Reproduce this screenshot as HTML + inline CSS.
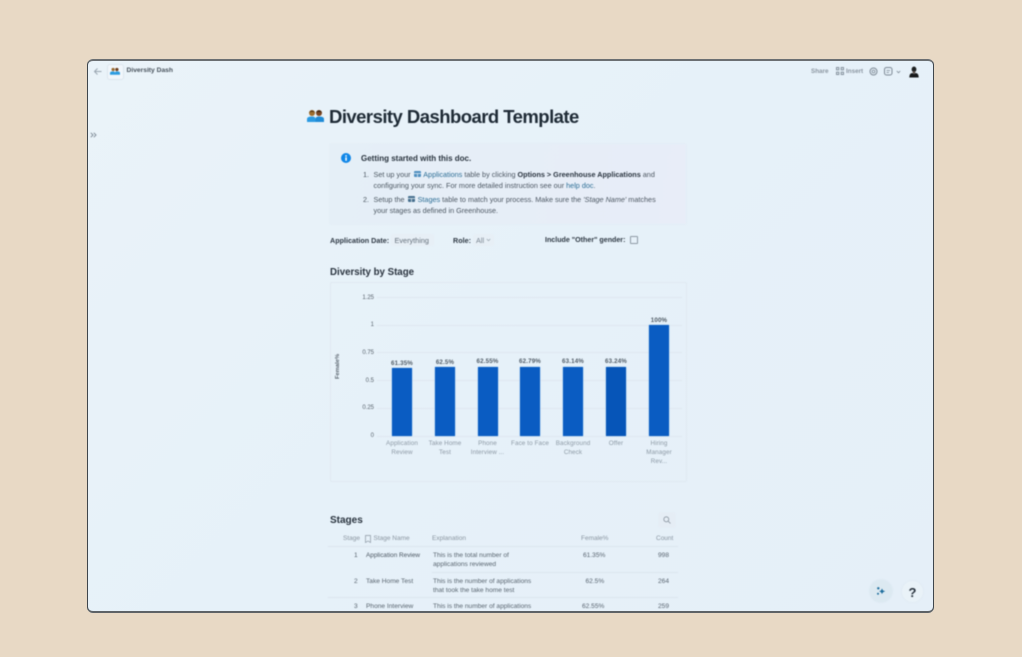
<!DOCTYPE html>
<html>
<head>
<meta charset="utf-8">
<style>
html,body{margin:0;padding:0;width:1022px;height:657px;overflow:hidden;background:#e8d9c5;font-family:"Liberation Sans",sans-serif;}
#win{position:absolute;left:87px;top:59px;width:847px;height:554px;box-sizing:border-box;border-radius:6px;background:linear-gradient(135deg,#eaf3f9 0%,#e6f1f9 50%,#e5eff8 100%);}
#frame{position:absolute;left:87px;top:58.500px;width:846.500px;height:554.500px;box-sizing:border-box;border:1.500px solid #3f464c;border-top:2px solid #6b6f72;border-bottom:2px solid #5d6266;border-radius:6px;filter:blur(.25px);}
#c{position:absolute;left:0;top:0;width:1022px;height:657px;filter:blur(.45px);clip-path:inset(60px 90px 45px 88px);}
.t{position:absolute;white-space:nowrap;line-height:1;}
.b{font-weight:bold;}
.gl{position:absolute;left:377px;width:305px;height:1px;background:#dfe8f0;}
.bar{position:absolute;width:20px;background:#0a5cc2;box-shadow:0 0 1px #5aa0e0;}
.val{position:absolute;font-size:6.200px;font-weight:bold;color:#515c67;text-align:center;width:50px;line-height:1;letter-spacing:.15px;}
.yl{position:absolute;font-size:6px;color:#59636d;text-align:right;width:30px;left:344px;line-height:1;}
.xl{position:absolute;font-size:6.300px;color:#8d99a5;text-align:center;width:50px;line-height:9px;letter-spacing:.1px;}
.row{position:absolute;height:1px;background:#dbe5ee;}
.td{position:absolute;font-size:6.600px;color:#5a6570;line-height:9px;white-space:nowrap;}
.th{position:absolute;font-size:6.500px;color:#8b96a1;line-height:1;white-space:nowrap;}
</style>
</head>
<body>
<div id="win"></div>
<div id="c">
<!-- top bar -->
<svg style="position:absolute;left:93px;top:67px" width="10" height="9" viewBox="0 0 10 9"><path d="M8.500 4.500H1.500M4.500 1.500L1.500 4.500L4.500 7.500" fill="none" stroke="#9aa6b1" stroke-width="1"/></svg>
<div style="position:absolute;left:107px;top:64px;width:15px;height:14px;background:#f1f6fb;border:1px solid #dde6ee;border-radius:3px"></div>
<svg style="position:absolute;left:110px;top:67px" width="10" height="8" viewBox="0 0 16 12"><circle cx="5" cy="3.500" r="2.600" fill="#9a6b30"/><circle cx="11" cy="3.500" r="2.600" fill="#6e4020"/><path d="M0 12V9Q0 6.500 5 6.500Q8 6.500 8 9V12Z" fill="#2c9be0"/><path d="M8 12V9Q8 6.500 11 6.500Q16 6.500 16 9V12Z" fill="#2c9be0"/></svg>
<div class="t b" style="left:126.500px;top:68px;font-size:6.700px;color:#48525c">Diversity Dash</div>

<div class="t b" style="left:811px;top:68.500px;font-size:6.300px;color:#8b96a1">Share</div>
<svg style="position:absolute;left:836px;top:67px" width="8" height="8" viewBox="0 0 8 8"><g fill="none" stroke="#7d8995" stroke-width=".9"><rect x=".5" y=".5" width="2.300" height="2.300"/><rect x="5.200" y=".5" width="2.300" height="2.300"/><rect x=".5" y="5.200" width="2.300" height="2.300"/><rect x="5.200" y="5.200" width="2.300" height="2.300"/></g></svg>
<div class="t b" style="left:846px;top:68.500px;font-size:6.300px;color:#8b96a1">Insert</div>
<svg style="position:absolute;left:869px;top:67px" width="9" height="9" viewBox="0 0 9 9"><circle cx="4.500" cy="4.500" r="3.500" fill="none" stroke="#7d8995" stroke-width="1"/><circle cx="4.500" cy="4.500" r="1.400" fill="none" stroke="#7d8995" stroke-width=".8"/></svg>
<svg style="position:absolute;left:884px;top:67px" width="9" height="9" viewBox="0 0 9 9"><rect x=".5" y=".5" width="7.500" height="7.500" rx="2" fill="none" stroke="#7d8995"/><path d="M2.500 3.500H6M2.500 5.500H5" stroke="#7d8995" stroke-width=".7"/></svg>
<svg style="position:absolute;left:896px;top:70px" width="5" height="4" viewBox="0 0 5 4"><path d="M.8 1L2.500 2.800L4.200 1" fill="none" stroke="#7d8995" stroke-width=".8"/></svg>
<svg style="position:absolute;left:908px;top:65px" width="12" height="13" viewBox="0 0 14 14"><ellipse cx="7" cy="4.500" rx="2.800" ry="3.300" fill="#1d2022"/><rect x="5.600" y="6.500" width="2.800" height="2.800" fill="#5b4f49"/><path d="M1.500 14Q1.500 9 5 8.700Q7 10.500 9 8.700Q12.500 9 12.500 14Z" fill="#17191b"/></svg>

<svg style="position:absolute;left:90px;top:132px" width="7" height="6" viewBox="0 0 7 6"><path d="M.8 .8L3 3L.8 5.200M3.800 .8L6 3L3.800 5.200" fill="none" stroke="#7d8995" stroke-width=".9"/></svg>

<!-- title -->
<svg style="position:absolute;left:307px;top:109px" width="17" height="13" viewBox="0 0 17 13"><circle cx="5" cy="4" r="3" fill="#a06e2e"/><path d="M2 3.500Q5 -.5 8 3.500Q5 2.300 2 3.500Z" fill="#5a3a15"/><circle cx="12" cy="4" r="3" fill="#7a4522"/><path d="M9 3.500Q12 -.5 15 3.500Q12 2.300 9 3.500Z" fill="#33200f"/><path d="M0 13V10Q0 7.500 5 7.500Q8.500 7.500 8.500 10V13Z" fill="#2b9ae2"/><path d="M8.500 13V10Q8.500 7.500 12 7.500Q17 7.500 17 10V13Z" fill="#1f8bd6"/></svg>
<div class="t b" style="left:329px;top:107.500px;font-size:18.500px;color:#1e2a35;letter-spacing:-.54px">Diversity Dashboard Template</div>

<!-- callout -->
<div style="position:absolute;left:330px;top:144px;width:356px;height:80px;background:linear-gradient(100deg,#e5eff7,#e8edf8);box-shadow:0 0 1px #d9e3ec"></div>
<svg style="position:absolute;left:341px;top:153px" width="10" height="10" viewBox="0 0 10 10"><circle cx="5" cy="5" r="5" fill="#1087e8"/><rect x="4.300" y="4.300" width="1.500" height="3.500" fill="#fff"/><rect x="4.300" y="2.200" width="1.500" height="1.400" fill="#fff"/></svg>
<div class="t b" style="left:361px;top:154.500px;font-size:8px;color:#29333e">Getting started with this doc.</div>
<div class="t" style="left:363px;top:170.500px;font-size:7.250px;color:#4c5762">1.</div>
<div class="t" style="left:373.500px;top:170.500px;font-size:7.250px;color:#4c5762">Set up your <svg width="7" height="6" viewBox="0 0 7 6" style="margin:0 1px"><rect width="7" height="6" rx="1" fill="#4f8fc0"/><path d="M0 2.500H7M3.500 2.500V6" stroke="#e8f1f8" stroke-width=".7"/></svg> <span style="color:#2f6f96">Applications</span> table by clicking <b style="color:#2b3540">Options &gt; Greenhouse Applications</b> and</div>
<div class="t" style="left:373.500px;top:181.500px;font-size:7.250px;color:#4c5762">configuring your sync. For more detailed instruction see our <span style="color:#2f6f96">help doc</span>.</div>
<div class="t" style="left:363px;top:195.500px;font-size:7.250px;color:#4c5762">2.</div>
<div class="t" style="left:373.500px;top:195.500px;font-size:7.250px;color:#4c5762">Setup the <svg width="7" height="6" viewBox="0 0 7 6" style="margin:0 1px"><rect width="7" height="6" rx="1" fill="#47708f"/><path d="M0 2.500H7M3.500 2.500V6" stroke="#e8f1f8" stroke-width=".7"/></svg> <span style="color:#2f6f96">Stages</span> table to match your process. Make sure the <i>'Stage Name'</i> matches</div>
<div class="t" style="left:373.500px;top:206.500px;font-size:7.250px;color:#4c5762">your stages as defined in Greenhouse.</div>

<!-- filters -->
<div class="t b" style="left:330px;top:236.500px;font-size:7.200px;color:#2f3944">Application Date:</div>
<div style="position:absolute;left:391px;top:234px;width:43px;height:12px;background:#e7eff6;border-radius:2px"></div>
<div class="t" style="left:394.500px;top:236.500px;font-size:7.300px;color:#66717c">Everything</div>
<div class="t b" style="left:453px;top:236.500px;font-size:7.200px;color:#2f3944">Role:</div>
<div style="position:absolute;left:473px;top:234px;width:21px;height:12px;background:#e7eff6;border-radius:2px"></div>
<div class="t" style="left:476px;top:236.500px;font-size:7.300px;color:#7b8691">All</div>
<svg style="position:absolute;left:486px;top:238px" width="5" height="4" viewBox="0 0 5 4"><path d="M.8 1L2.500 2.800L4.200 1" fill="none" stroke="#98a3ad" stroke-width=".7"/></svg>
<div class="t b" style="left:545px;top:236.500px;font-size:7.100px;color:#2f3944">Include "Other" gender:</div>
<div style="position:absolute;left:630px;top:236px;width:6px;height:6px;border:1px solid #8f9aa5;border-radius:1px"></div>

<!-- chart -->
<div class="t b" style="left:330px;top:267.500px;font-size:9.700px;color:#29333e">Diversity by Stage</div>
<div style="position:absolute;left:330px;top:282px;width:355px;height:198px;border:1px solid #e0e9f1;border-radius:2px"></div>
<div class="gl" style="top:297px"></div>
<div class="gl" style="top:325px"></div>
<div class="gl" style="top:352px"></div>
<div class="gl" style="top:380px"></div>
<div class="gl" style="top:408px"></div>
<div class="gl" style="top:436px"></div>
<div class="yl" style="top:294.500px">1.25</div>
<div class="yl" style="top:322px">1</div>
<div class="yl" style="top:349.500px">0.75</div>
<div class="yl" style="top:377.500px">0.5</div>
<div class="yl" style="top:405px">0.25</div>
<div class="yl" style="top:433px">0</div>
<div class="t b" style="left:336px;top:379px;font-size:5.800px;color:#59636d;transform:rotate(-90deg);transform-origin:0 0">Female%</div>

<div class="bar" style="left:392px;top:368px;height:68px"></div>
<div class="bar" style="left:435px;top:367px;height:69px"></div>
<div class="bar" style="left:477.500px;top:367px;height:69px"></div>
<div class="bar" style="left:520px;top:367px;height:69px"></div>
<div class="bar" style="left:563px;top:366.500px;height:69.500px"></div>
<div class="bar" style="left:605.500px;top:366.500px;height:69.500px;background:#0655b8"></div>
<div class="bar" style="left:649px;top:325px;height:111px"></div>

<div class="val" style="left:377px;top:360.500px">61.35%</div>
<div class="val" style="left:420px;top:359.500px">62.5%</div>
<div class="val" style="left:462.500px;top:359px">62.55%</div>
<div class="val" style="left:505px;top:359px">62.79%</div>
<div class="val" style="left:548px;top:359px">63.14%</div>
<div class="val" style="left:591px;top:359px">63.24%</div>
<div class="val" style="left:634px;top:317.500px">100%</div>

<div class="xl" style="left:377px;top:439px">Application<br>Review</div>
<div class="xl" style="left:420px;top:439px">Take Home<br>Test</div>
<div class="xl" style="left:462.500px;top:439px">Phone<br>Interview ...</div>
<div class="xl" style="left:505px;top:439px">Face to Face</div>
<div class="xl" style="left:548px;top:439px">Background<br>Check</div>
<div class="xl" style="left:591px;top:439px">Offer</div>
<div class="xl" style="left:634px;top:439px">Hiring<br>Manager<br>Rev...</div>

<!-- stages -->
<div class="t b" style="left:330px;top:515.500px;font-size:10px;color:#29333e">Stages</div>
<div style="position:absolute;left:658px;top:512px;width:18px;height:16px;background:#e5edf5;border-radius:3px"></div>
<svg style="position:absolute;left:663px;top:516px" width="8" height="8" viewBox="0 0 8 8"><circle cx="3.300" cy="3.300" r="2.500" fill="none" stroke="#8b96a1" stroke-width=".8"/><path d="M5.200 5.200L7.500 7.500" stroke="#8b96a1" stroke-width=".8"/></svg>
<div class="th" style="left:343px;top:536px">Stage</div>
<svg style="position:absolute;left:365px;top:535px" width="6" height="8" viewBox="0 0 6 8"><path d="M.5.500H5.500V7.500L3 6L.5 7.500Z" fill="none" stroke="#8b96a1" stroke-width=".7"/></svg>
<div class="th" style="left:373.500px;top:536px">Stage Name</div>
<div class="th" style="left:432px;top:536px">Explanation</div>
<div class="th" style="left:581px;top:536px">Female%</div>
<div class="th" style="left:656px;top:536px">Count</div>
<div class="row" style="left:328px;top:546px;width:350px"></div>

<div class="td" style="left:354px;top:551px">1</div>
<div class="td" style="left:366px;top:551px;color:#4c5762;font-size:6.400px">Application Review</div>
<div class="td" style="left:433px;top:551px">This is the total number of<br>applications reviewed</div>
<div class="td" style="left:583px;top:551px">61.35%</div>
<div class="td" style="left:658px;top:551px">998</div>
<div class="row" style="left:432px;top:572px;width:246px"></div>

<div class="td" style="left:354px;top:576.500px">2</div>
<div class="td" style="left:366px;top:576.500px">Take Home Test</div>
<div class="td" style="left:433px;top:576.500px">This is the number of applications<br>that took the take home test</div>
<div class="td" style="left:585.500px;top:576.500px">62.5%</div>
<div class="td" style="left:658px;top:576.500px">264</div>
<div class="row" style="left:328px;top:597px;width:350px"></div>

<div class="td" style="left:354px;top:601.500px">3</div>
<div class="td" style="left:366px;top:601.500px">Phone Interview</div>
<div class="td" style="left:433px;top:601.500px">This is the number of applications</div>
<div class="td" style="left:582px;top:601.500px">62.55%</div>
<div class="td" style="left:658px;top:601.500px">259</div>

<!-- floating buttons -->
<div style="position:absolute;left:870px;top:580px;width:22px;height:22px;border-radius:50%;background:#dce9f1;box-shadow:0 0 2px #d0dfe9"></div>
<svg style="position:absolute;left:876px;top:586px" width="10" height="10" viewBox="0 0 10 10"><path d="M6 2.500L7 4.500L9.200 5.300L7 6.200L6 8L5 6.200L3.200 5.300L5 4.500Z" fill="#1b6c9c"/><circle cx="2.300" cy="2.300" r="1.200" fill="#1b6c9c"/><circle cx="2" cy="7.800" r="1" fill="#1b6c9c"/></svg>
<div style="position:absolute;left:902px;top:581px;width:21px;height:21px;border-radius:50%;background:#e9f2f8;box-shadow:0 0 2px #dbe5ed"></div>
<div class="t b" style="left:902px;top:585.500px;width:21px;text-align:center;font-size:13px;color:#29333e">?</div>
</div>
<div id="frame"></div>
</body>
</html>
